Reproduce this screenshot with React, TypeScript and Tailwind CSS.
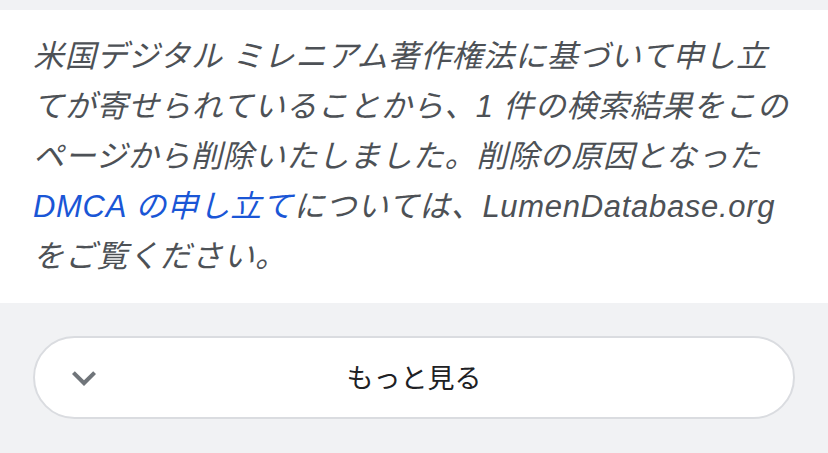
import React from "react";

export default function App() {
  return (
    <div className="w-[828px] h-[453px] bg-[#f1f2f4] pt-[10px] overflow-hidden">
      <div className="bg-white px-[33px] pt-[22px] pb-[21px]">
        <p
          className="italic text-[31px] leading-[50px] tracking-[0.7px] text-[#4d5156] whitespace-nowrap"
          style={{ fontFamily: '"Liberation Sans", "Noto Sans CJK JP", sans-serif' }}
        >
          米国デジタル ミレニアム著作権法に基づいて申し立
          <br />
          てが寄せられていることから、1 件の検索結果をこの
          <br />
          ページから削除いたしました。削除の原因となった
          <br />
          <span className="text-[#1a56d6]">DMCA の申し立て</span>については、LumenDatabase.org
          <br />
          をご覧ください。
        </p>
      </div>
      <div className="px-[33px] pt-[33px]">
        <button
          className="w-full h-[83px] bg-white border-2 border-[#dadce0] rounded-full flex items-center px-[25px]"
          style={{ fontFamily: '"Noto Sans CJK JP", "Liberation Sans", sans-serif' }}
        >
          <svg width="48" height="48" viewBox="0 0 24 24" className="shrink-0">
            <path d="M16.59 8.59L12 13.17 7.41 8.59 6 10l6 6 6-6z" fill="#70757a" />
          </svg>
          <span className="flex-1 text-center text-[27px] text-[#202124]">もっと見る</span>
          <span className="w-[48px] shrink-0" />
        </button>
      </div>
    </div>
  );
}
